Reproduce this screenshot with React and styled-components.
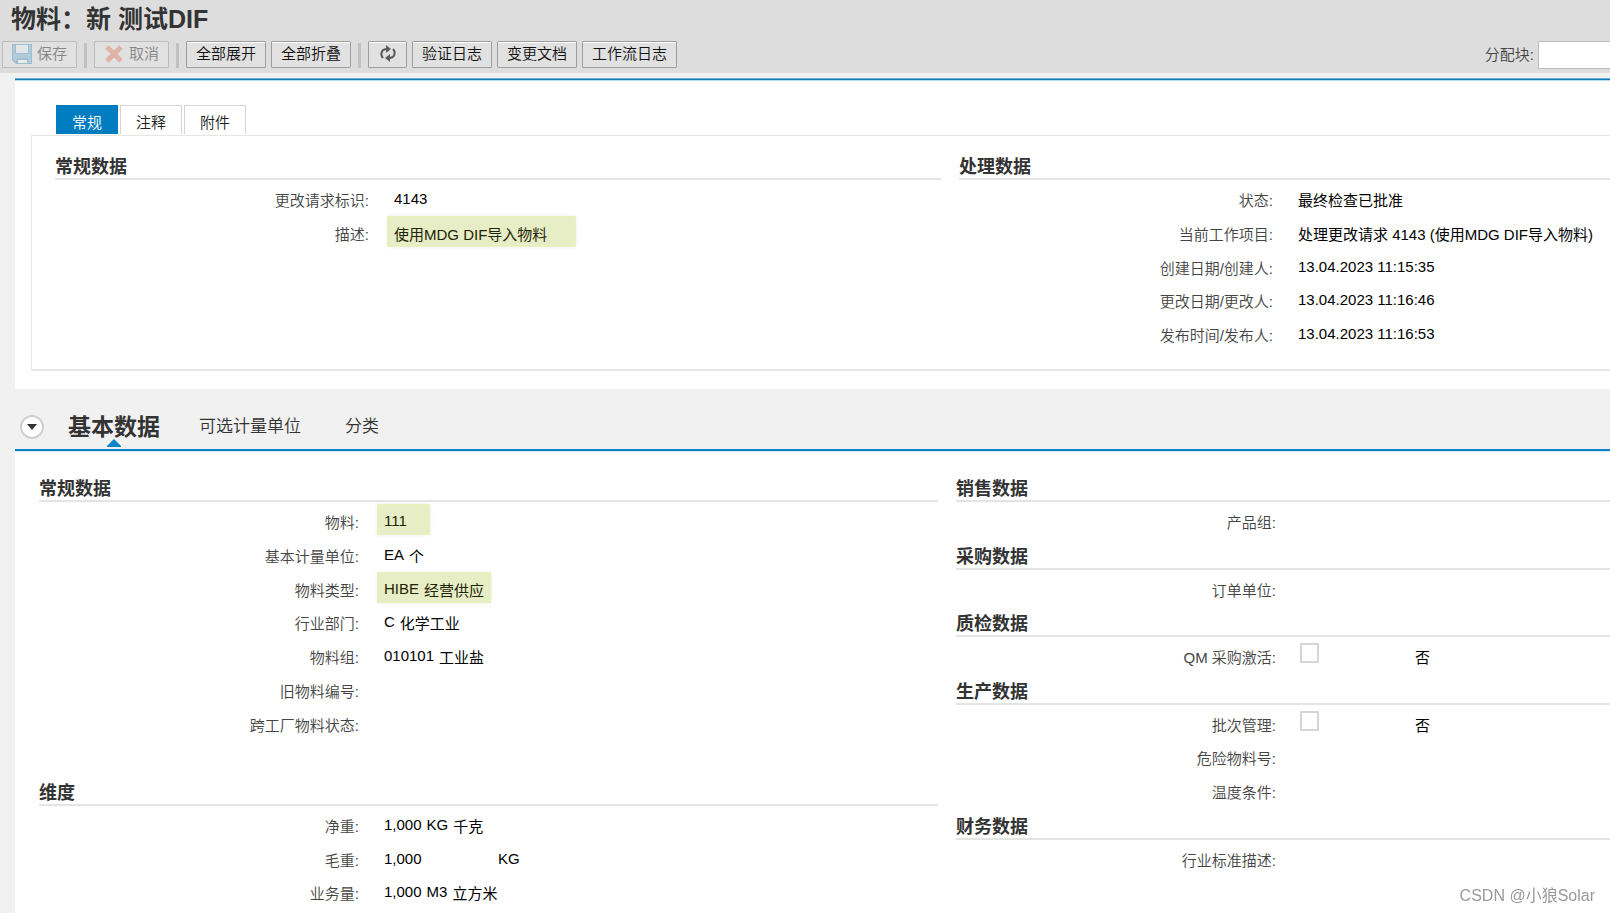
import React from "react";
import styled, { createGlobalStyle, css } from "styled-components";

const GlobalStyle = createGlobalStyle`
  *, *::before, *::after { box-sizing: border-box; }
  body {
    margin: 0;
    background: #f1f1f1;
    color: #000;
    font: 350 15px/20px "Liberation Sans", "Noto Sans CJK SC", sans-serif;
  }
  h1, h2, h3, p { margin: 0; }
  button, input { font: inherit; }
`;

const Page = styled.div`
  display: flex;
  flex-direction: column;
  min-height: 100vh;
  overflow: hidden;
`;

const Header = styled.header`
  background: #ddd;
  padding-top: 3px;
  height: 73px;
`;

const Title = styled.h1`
  padding-left: 11px;
  font-size: 25px;
  line-height: 32px;
  font-weight: 700;
  color: #333;
`;

const Toolbar = styled.div`
  display: flex;
  align-items: flex-start;
  gap: 5px;
  padding: 6px 0 0 2px;
`;

const ToolButton = styled.button`
  display: flex;
  align-items: center;
  justify-content: center;
  gap: 5px;
  height: 27px;
  padding: 0 9px 2px;
  border: 1px solid #9d9d9d;
  border-radius: 1px;
  background: #e1e1e1;
  box-shadow: inset 0 1px 0 #fff;
  color: #111;
  line-height: 20px;
  white-space: nowrap;

  &:disabled {
    border-color: #bcbcbc;
    box-shadow: none;
    color: #858585;
  }
`;

const Divider = styled.span`
  width: 3px;
  height: 25px;
  margin: 2px 2px 0;
  background: #c1c1c1;
`;

const BlockPicker = styled.label`
  display: flex;
  gap: 4px;
  margin-left: auto;
  line-height: 28px;
  color: #444;
`;

const BlockInput = styled.input`
  width: 72px;
  height: 28px;
  padding: 0 6px;
  border: 1px solid #bcbcbc;
  border-right: 0;
  border-radius: 0;
  background: #fff;
`;

const Panel = styled.section`
  margin-left: 15px;
  background: #fff;
`;

const RequestPanel = styled(Panel)`
  margin-top: 5px;
  padding: 0 0 18px 16px;
  box-shadow: inset 0 1px 0 #66b2d9, inset 0 2px 0 #1179b4, inset 0 3px 0 #b3dcf0;
`;

const TabList = styled.div`
  display: flex;
  gap: 2px;
  padding: 27px 0 1px 25px;
`;

const Tab = styled.button`
  width: 62px;
  height: 29px;
  padding: 5px 0 0;
  border: 1px solid #d4d4d4;
  border-bottom: 0;
  background: #fff;
  color: #222;
  line-height: 20px;

  &[aria-selected="true"] {
    border-color: #007cc0;
    background: #007cc0;
    color: #fff;
  }
`;

const TabPanel = styled.div`
  padding: 10px 0 20px 23px;
  border: solid #e6e6e6;
  border-width: 1px 0 2px 1px;
`;

const Columns = styled.div`
  display: grid;
  grid-template-columns: minmax(0, 886fr) minmax(0, 651fr);
  column-gap: 18px;
`;

const Fields = styled.div`
  --label-width: ${(p) => p.$labelWidth}px;
  display: grid;
  align-content: start;
  grid-auto-rows: 34px 34px 34px 33px;
`;

const GroupTitle = styled.h3`
  display: flex;
  align-items: flex-end;
  border-bottom: 2px solid #e4e4e4;
  color: #333;
  font-size: 18px;
  line-height: 22px;
  font-weight: 700;
  ${(p) => p.$spaced && css`
    grid-row: span 2;
    padding-top: 34px;
  `}
`;

const FieldRow = styled.div`
  display: flex;
  align-items: flex-start;
  gap: 18px;
`;

const labelText = css`
  flex: none;
  width: var(--label-width);
  padding-top: 11px;
  color: #444;
  text-align: right;
`;

const FieldName = styled.span`${labelText}`;
const FieldLabel = styled.label`${labelText}`;

const Value = styled.div`
  display: flex;
  gap: 5px;
  height: 31px;
  margin-top: 2px;
  padding: 9px 7px 0;
  font-weight: 400;
  white-space: nowrap;
  ${(p) => p.$marked && css`
    min-width: ${p.$marked}px;
    background: #e7edc5;
    box-shadow: inset 0 0 3px #edf6b8, 0 0 4px #eee;
    color: #1d2405;
  `}
`;

const Part = styled.span`
  line-height: ${(p) => (p.$latin ? 16 : 20)}px;
  min-width: ${(p) => (p.$wide ? 109 : 0)}px;
`;

const CheckCell = styled.div`
  display: flex;
  gap: 96px;
  padding: 6px 0 0 6px;
`;

const CheckBox = styled.input`
  appearance: none;
  width: 19px;
  height: 20px;
  margin: 0;
  border: 2px solid #d6d6d6;
  background: #fff;
`;

const CheckText = styled.span`
  padding-top: 5px;
  font-weight: 400;
`;

const SectionBar = styled.nav`
  display: flex;
  align-items: center;
  height: 60px;
  margin-left: 15px;
  padding: 16px 0 0 5px;
`;

const CollapseButton = styled.button`
  display: flex;
  align-items: center;
  justify-content: center;
  width: 24px;
  height: 24px;
  margin-right: 24px;
  padding: 0;
  border: 2px solid #cfcfcf;
  border-radius: 50%;
  background: #fff;
`;

const SectionLink = styled.a`
  position: relative;
  margin-right: 44px;
  color: #333;
  font-size: 17px;
  line-height: 44px;
  text-decoration: none;

  &[aria-current] {
    margin-right: 39px;
    font-size: 23px;
    font-weight: 700;
  }
`;

const Pointer = styled.svg`
  position: absolute;
  left: 50%;
  bottom: 2px;
  transform: translateX(-50%);
`;

const BasicPanel = styled(Panel)`
  flex: 1;
  padding: 19px 0 0 24px;
  box-shadow: inset 0 2px 0 #0a84c6, inset 0 3px 0 #cfe7f4;
`;

const BasicColumns = styled(Columns)`
  grid-template-columns: minmax(0, 899fr) minmax(0, 654fr);
`;

const Watermark = styled.p`
  position: fixed;
  right: 15px;
  bottom: 7px;
  color: #999;
  font-size: 16px;
  font-weight: 400;
`;

const SaveIcon = () => (
  <svg width="20" height="20" viewBox="0 0 20 20" aria-hidden="true">
    <path d="M0 0H20V20H4L0 16Z" fill="#9dbfd0" />
    <path d="M1 1H19V19H5L1 15Z" fill="#b2cbd8" />
    <path d="M3 0H17V10H3Z" fill="#9dbfd0" />
    <path d="M4 1H16V9H4Z" fill="#e4e7e9" />
    <path d="M4 20V16L7 14H16V20Z" fill="#9dbfd0" />
    <path d="M6 16H15V19H6Z" fill="#e8ebec" />
  </svg>
);

const CancelIcon = () => (
  <svg width="20" height="20" viewBox="0 0 20 20" aria-hidden="true">
    <path d="M3 3 17 17M17 3 3 17" stroke="#e0b3a8" strokeWidth="5" />
  </svg>
);

const RefreshIcon = () => (
  <svg width="19" height="19" viewBox="0 0 19 19" aria-hidden="true">
    <g fill="none" stroke="#5c5c5c" strokeWidth="2">
      <path d="M5 14C2 11 3 5 9 5" />
      <path d="M15 5C18 8 17 14 11 14" />
    </g>
    <path d="M8 1 13 5 8 9ZM12 10 7 14 12 18Z" fill="#5c5c5c" />
  </svg>
);

const isLatin = (text) => /^[\x20-\x7e]+$/.test(text);

function Field({ name, parts = [], marked, wide }) {
  return (
    <FieldRow>
      <FieldName>{name}:</FieldName>
      {parts.length > 0 && (
        <Value $marked={marked}>
          {parts.map((text, i) => (
            <Part key={text} $latin={isLatin(text)} $wide={wide && i === 0}>{text}</Part>
          ))}
        </Value>
      )}
    </FieldRow>
  );
}

function CheckField({ id, name, text }) {
  return (
    <FieldRow>
      <FieldLabel htmlFor={id}>{name}:</FieldLabel>
      <CheckCell>
        <CheckBox type="checkbox" id={id} />
        <CheckText>{text}</CheckText>
      </CheckCell>
    </FieldRow>
  );
}

export default function App() {
  return (
    <Page>
      <GlobalStyle />
      <Header>
        <Title>物料：新 测试DIF</Title>
        <Toolbar>
          <ToolButton disabled><SaveIcon />保存</ToolButton>
          <Divider />
          <ToolButton disabled><CancelIcon />取消</ToolButton>
          <Divider />
          <ToolButton>全部展开</ToolButton>
          <ToolButton>全部折叠</ToolButton>
          <Divider />
          <ToolButton aria-label="刷新"><RefreshIcon /></ToolButton>
          <ToolButton>验证日志</ToolButton>
          <ToolButton>变更文档</ToolButton>
          <ToolButton>工作流日志</ToolButton>
          <BlockPicker>
            分配块:
            <BlockInput type="text" />
          </BlockPicker>
        </Toolbar>
      </Header>

      <RequestPanel>
        <TabList role="tablist">
          <Tab role="tab" aria-selected="true">常规</Tab>
          <Tab role="tab" aria-selected="false">注释</Tab>
          <Tab role="tab" aria-selected="false">附件</Tab>
        </TabList>
        <TabPanel role="tabpanel">
          <Columns>
            <Fields $labelWidth={314}>
              <GroupTitle>常规数据</GroupTitle>
              <Field name="更改请求标识" parts={["4143"]} />
              <Field name="描述" parts={["使用MDG DIF导入物料"]} marked={189} />
            </Fields>
            <Fields $labelWidth={314}>
              <GroupTitle>处理数据</GroupTitle>
              <Field name="状态" parts={["最终检查已批准"]} />
              <Field name="当前工作项目" parts={["处理更改请求 4143 (使用MDG DIF导入物料)"]} />
              <Field name="创建日期/创建人" parts={["13.04.2023 11:15:35"]} />
              <Field name="更改日期/更改人" parts={["13.04.2023 11:16:46"]} />
              <Field name="发布时间/发布人" parts={["13.04.2023 11:16:53"]} />
            </Fields>
          </Columns>
        </TabPanel>
      </RequestPanel>

      <SectionBar>
        <CollapseButton aria-label="折叠">
          <svg width="10" height="6" viewBox="0 0 10 6" aria-hidden="true">
            <path d="M0 0H10L5 6Z" fill="#333" />
          </svg>
        </CollapseButton>
        <SectionLink href="#basic" aria-current="true">
          基本数据
          <Pointer width="14" height="8" viewBox="0 0 14 8" aria-hidden="true">
            <path d="M7 0 14 7V8H0V7Z" fill="#0a84c6" />
          </Pointer>
        </SectionLink>
        <SectionLink href="#units">可选计量单位</SectionLink>
        <SectionLink href="#classes">分类</SectionLink>
      </SectionBar>

      <BasicPanel id="basic">
        <BasicColumns>
          <Fields $labelWidth={320}>
            <GroupTitle>常规数据</GroupTitle>
            <Field name="物料" parts={["111"]} marked={53} />
            <Field name="基本计量单位" parts={["EA", "个"]} />
            <Field name="物料类型" parts={["HIBE", "经营供应"]} marked={114} />
            <Field name="行业部门" parts={["C", "化学工业"]} />
            <Field name="物料组" parts={["010101", "工业盐"]} />
            <Field name="旧物料编号" />
            <Field name="跨工厂物料状态" />
            <GroupTitle $spaced>维度</GroupTitle>
            <Field name="净重" parts={["1,000", "KG", "千克"]} />
            <Field name="毛重" parts={["1,000", "KG"]} wide />
            <Field name="业务量" parts={["1,000", "M3", "立方米"]} />
          </Fields>
          <Fields $labelWidth={320}>
            <GroupTitle>销售数据</GroupTitle>
            <Field name="产品组" />
            <GroupTitle>采购数据</GroupTitle>
            <Field name="订单单位" />
            <GroupTitle>质检数据</GroupTitle>
            <CheckField id="qm-active" name="QM 采购激活" text="否" />
            <GroupTitle>生产数据</GroupTitle>
            <CheckField id="batch" name="批次管理" text="否" />
            <Field name="危险物料号" />
            <Field name="温度条件" />
            <GroupTitle>财务数据</GroupTitle>
            <Field name="行业标准描述" />
          </Fields>
        </BasicColumns>
      </BasicPanel>
      <Watermark>CSDN @小狼Solar</Watermark>
    </Page>
  );
}
